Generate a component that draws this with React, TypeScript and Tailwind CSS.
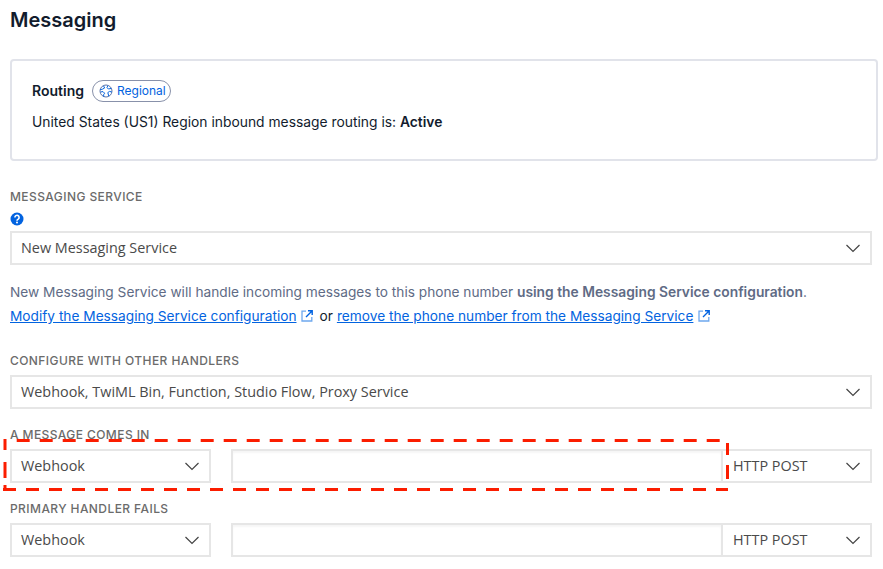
import type { ReactNode } from "react";

const Chevron = () => (
  <svg width="16" height="16" viewBox="0 0 16 16" fill="none" className="shrink-0" aria-hidden>
    <path d="M1.5 5l6.5 6.5L14.5 5" stroke="#444" strokeWidth="1.2" />
  </svg>
);

const ExternalIcon = ({ className }: { className: string }) => (
  <svg width="12" height="12" viewBox="0 0 12 12" fill="none" className={`inline-block align-[-1px] ${className}`} aria-hidden>
    <path d="M5 1.2H1v9.8h9.8V7" stroke="#6ea8ee" strokeWidth="1.3" />
    <path d="M5 7l6-6M7 .8h4.2V5" stroke="#0263e0" strokeWidth="1.4" />
  </svg>
);

const GlobeIcon = () => (
  <svg width="14" height="14" viewBox="0 0 14 14" fill="none" aria-hidden>
    <circle cx="7" cy="7" r="6" stroke="#5c74a8" strokeWidth="1" />
    <path d="M4.5 1.8 5.6 4 3.4 5.2 1.2 5.6M1.6 8l2.4-.4 1.6 1.6-1 1.6.2 2M9 1.6 8 3.6l1.4 1.4 3-.6M12.8 8 10.5 7.4 8.8 8.6l1 3.6" stroke="#0263e0" strokeWidth="1" />
  </svg>
);

const HelpIcon = () => (
  <svg width="14" height="14" viewBox="0 0 14 14" aria-hidden>
    <circle cx="7" cy="7" r="6.5" fill="#0263e0" />
    <path d="M4.9 5.4a2.1 2.1 0 1 1 3.3 1.7c-.8.5-1.2.9-1.2 1.7" stroke="#fff" strokeWidth="1.6" fill="none" />
    <circle cx="7" cy="10.6" r="1" fill="#fff" />
  </svg>
);

function FieldLabel({ children, className }: { children: ReactNode; className: string }) {
  return (
    <div className={`h-[16px] font-['Inter',sans-serif] text-[12px] leading-[16px] font-medium tracking-[0.42px] text-[#6b6b6b] uppercase ${className}`}>
      {children}
    </div>
  );
}

function Select({ value, className }: { value: string; className: string }) {
  return (
    <div className={`flex h-[34px] items-center justify-between border-2 border-[#e6e6e6] bg-white pr-[9px] pl-[9px] font-['Open_Sans',sans-serif] text-[14.4px] text-[#4a4a4a] ${className}`}>
      <span>{value}</span>
      <Chevron />
    </div>
  );
}

function HandlerRow({ className }: { className: string }) {
  return (
    <div className={`flex w-[862px] ${className}`}>
      <Select value="Webhook" className="w-[201px]" />
      <div className="ml-[20px] h-[34px] w-[492px] border-2 border-[#e6e6e6] bg-white shadow-[inset_0_2px_2px_rgba(0,0,0,0.04)]" />
      <Select value="HTTP POST" className="w-[149px] border-l-0 pl-[10px]" />
    </div>
  );
}

export default function App() {
  return (
    <div className="relative h-[569px] w-[883px] overflow-hidden bg-white pl-[10px] font-['Inter',sans-serif]">
      <h1 className="pt-[8px] text-[20px] leading-[24px] font-semibold text-[#121c2d]">Messaging</h1>

      <div className="mt-[27px] h-[102px] w-[868px] rounded-[4px] border-2 border-[#e1e3ea] pt-[19px] pl-[20px]">
        <div className="flex items-center">
          <span className="text-[14px] leading-[20px] font-semibold text-[#121c2d]">Routing</span>
          <span className="ml-[8px] flex h-[22px] items-center gap-[4px] rounded-full border border-[#8891aa] pr-[4px] pl-[6px] text-[12px] text-[#0263e0]">
            <GlobeIcon />
            Regional
          </span>
        </div>
        <p className="mt-[10px] text-[13.85px] leading-[20px] text-[#121c2d]">
          United States (US1) Region inbound message routing is: <b className="font-semibold">Active</b>
        </p>
      </div>

      <FieldLabel className="mt-[28px]">Messaging Service</FieldLabel>
      <div className="mt-[7px] h-[14px] leading-[0]">
        <HelpIcon />
      </div>
      <Select value="New Messaging Service" className="mt-[5px] w-[862px]" />

      <p className="mt-[17px] text-[13.7px] leading-[20px] text-[#606b85]">
        New Messaging Service will handle incoming messages to this phone number{" "}
        <b className="text-[13.82px] font-semibold">using the Messaging Service configuration</b>.
      </p>
      <p className="mt-[4px] text-[13.7px] leading-[20px] text-[#121c2d]">
        <a className="text-[#0263e0] underline">Modify the Messaging Service configuration</a>
        <ExternalIcon className="mr-[7px] ml-[4px]" />
        or
        <a className="ml-[4px] text-[#0263e0] underline">remove the phone number from the Messaging Service</a>
        <ExternalIcon className="ml-[5px]" />
      </p>

      <FieldLabel className="mt-[27px]">Configure with other handlers</FieldLabel>
      <Select value="Webhook, TwiML Bin, Function, Studio Flow, Proxy Service" className="mt-[6px] w-[862px]" />

      <FieldLabel className="mt-[18px]">A message comes in</FieldLabel>
      <HandlerRow className="mt-[6px]" />

      <FieldLabel className="mt-[18px]">Primary handler fails</FieldLabel>
      <HandlerRow className="mt-[6px]" />

      {/* red dashed annotation over the first handler row */}
      <svg width="883" height="569" className="pointer-events-none absolute top-0 left-0" fill="none" stroke="#fb1d00" strokeWidth="3" aria-hidden>
        <path d="M16.7 440.5H727" strokeDasharray="13 10" />
        <path d="M3 489.5H728" strokeDasharray="13 10" />
        <path d="M5 439V450M5 462V478M5 485V491" />
        <path d="M727.5 443V455M727.5 465V479" />
      </svg>
    </div>
  );
}
